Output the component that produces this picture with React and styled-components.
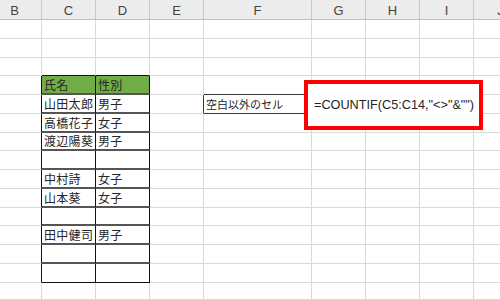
import React from "react";
import styled, { createGlobalStyle } from "styled-components";

const Global = createGlobalStyle`
  html, body { margin: 0; padding: 0; background: #fff; }
  body { font-family: "Liberation Sans", "Noto Sans CJK JP", sans-serif; }
`;

const COLS = [
  { key: "B", w: 54 },
  { key: "C", w: 54 },
  { key: "D", w: 54 },
  { key: "E", w: 54 },
  { key: "F", w: 108 },
  { key: "G", w: 54 },
  { key: "H", w: 54 },
  { key: "I", w: 54 },
  { key: "J", w: 54 },
];
const ROW_H = [19, 19, 18, 19, 19, 19, 18, 19, 19, 19, 18, 19, 19, 19, 17];
const TEMPLATE_COLS = COLS.map((c) => `${c.w}px`).join(" ");

const DATA = {
  C4: "氏名",
  D4: "性別",
  C5: "山田太郎",
  D5: "男子",
  C6: "高橋花子",
  D6: "女子",
  C7: "渡辺陽葵",
  D7: "男子",
  C9: "中村詩",
  D9: "女子",
  C10: "山本葵",
  D10: "女子",
  C12: "田中健司",
  D12: "男子",
  F5: "空白以外のセル",
};

const GRID = "#d9d9d9";

const Sheet = styled.div`
  position: relative;
  width: 500px;
  height: 300px;
  overflow: hidden;
  background: #fff;
`;

const Canvas = styled.div`
  margin-left: -12px;
  width: 540px;
`;

const HeaderRow = styled.div`
  display: grid;
  grid-template-columns: ${TEMPLATE_COLS};
  height: 20px;
  background: #ececec;
  border-bottom: 1px solid #bdbdbd;
  box-sizing: border-box;
`;

const HeaderCell = styled.div`
  display: flex;
  align-items: center;
  justify-content: center;
  border-right: 1px solid #c9c9c9;
  font-family: "Liberation Sans", Arial, sans-serif;
  font-size: 13px;
  color: #444;
  padding-top: 1px;
`;

const Body = styled.div`
  display: grid;
  grid-template-columns: ${TEMPLATE_COLS};
  grid-template-rows: ${ROW_H.map((h) => `${h}px`).join(" ")};
`;

const Cell = styled.div`
  box-sizing: border-box;
  display: flex;
  align-items: center;
  padding: 0 0 0 2px;
  border-right: 1px solid ${(p) => p.$right};
  border-bottom: ${(p) => p.$bottomW}px solid ${(p) => p.$bottom};
  background: ${(p) => (p.$green ? "#70ad47" : "#fff")};
  font-family: "Noto Sans CJK JP", "Liberation Sans", sans-serif;
  font-size: ${(p) => (p.$small ? "11px" : "12px")};
  letter-spacing: ${(p) => (p.$small ? "0" : "0.3px")};
  color: #262626;
  white-space: nowrap;
  overflow: hidden;
  line-height: 1;
`;

const FormulaBox = styled.div`
  position: absolute;
  left: 304px;
  top: 80px;
  width: 179px;
  height: 50px;
  box-sizing: border-box;
  border: 4px solid #ff0000;
  background: #fff;
  display: flex;
  align-items: center;
  padding-left: 6px;
  font-family: "Liberation Sans", Arial, sans-serif;
  font-size: 12.7px;
  color: #262626;
  white-space: nowrap;
`;

function cellStyle(col, row) {
  const inTable = (col === "C" || col === "D") && row >= 4 && row <= 14;
  let right = GRID;
  let bottom = GRID;
  let bottomW = 1;
  if ((inTable || col === "B") && row >= 4 && row <= 14) right = "#111";
  if ((col === "E" || col === "F") && row === 5) right = "#3a3a3a";
  if ((col === "C" || col === "D") && row === 3) bottom = "#111";
  if (inTable) {
    if (row === 14) {
      bottom = "#111";
    } else {
      bottom = "#555";
      bottomW = 2;
    }
  }
  if (col === "F" && (row === 4 || row === 5)) bottom = "#3a3a3a";
  return { right, bottom, bottomW };
}

export default function App() {
  const cells = [];
  ROW_H.forEach((_, i) => {
    const row = i + 1;
    COLS.forEach(({ key }) => {
      const s = cellStyle(key, row);
      const id = `${key}${row}`;
      cells.push(
        <Cell
          key={id}
          $right={s.right}
          $bottom={s.bottom}
          $bottomW={s.bottomW}
          $green={row === 4 && (key === "C" || key === "D")}
          $small={id === "F5"}
        >
          {DATA[id] || ""}
        </Cell>
      );
    });
  });

  return (
    <>
      <Global />
      <Sheet>
        <Canvas>
          <HeaderRow>
            {COLS.map((c) => (
              <HeaderCell key={c.key}>{c.key}</HeaderCell>
            ))}
          </HeaderRow>
          <Body>{cells}</Body>
        </Canvas>
        <FormulaBox>=COUNTIF(C5:C14,"&lt;&gt;"&amp;"")</FormulaBox>
      </Sheet>
    </>
  );
}
